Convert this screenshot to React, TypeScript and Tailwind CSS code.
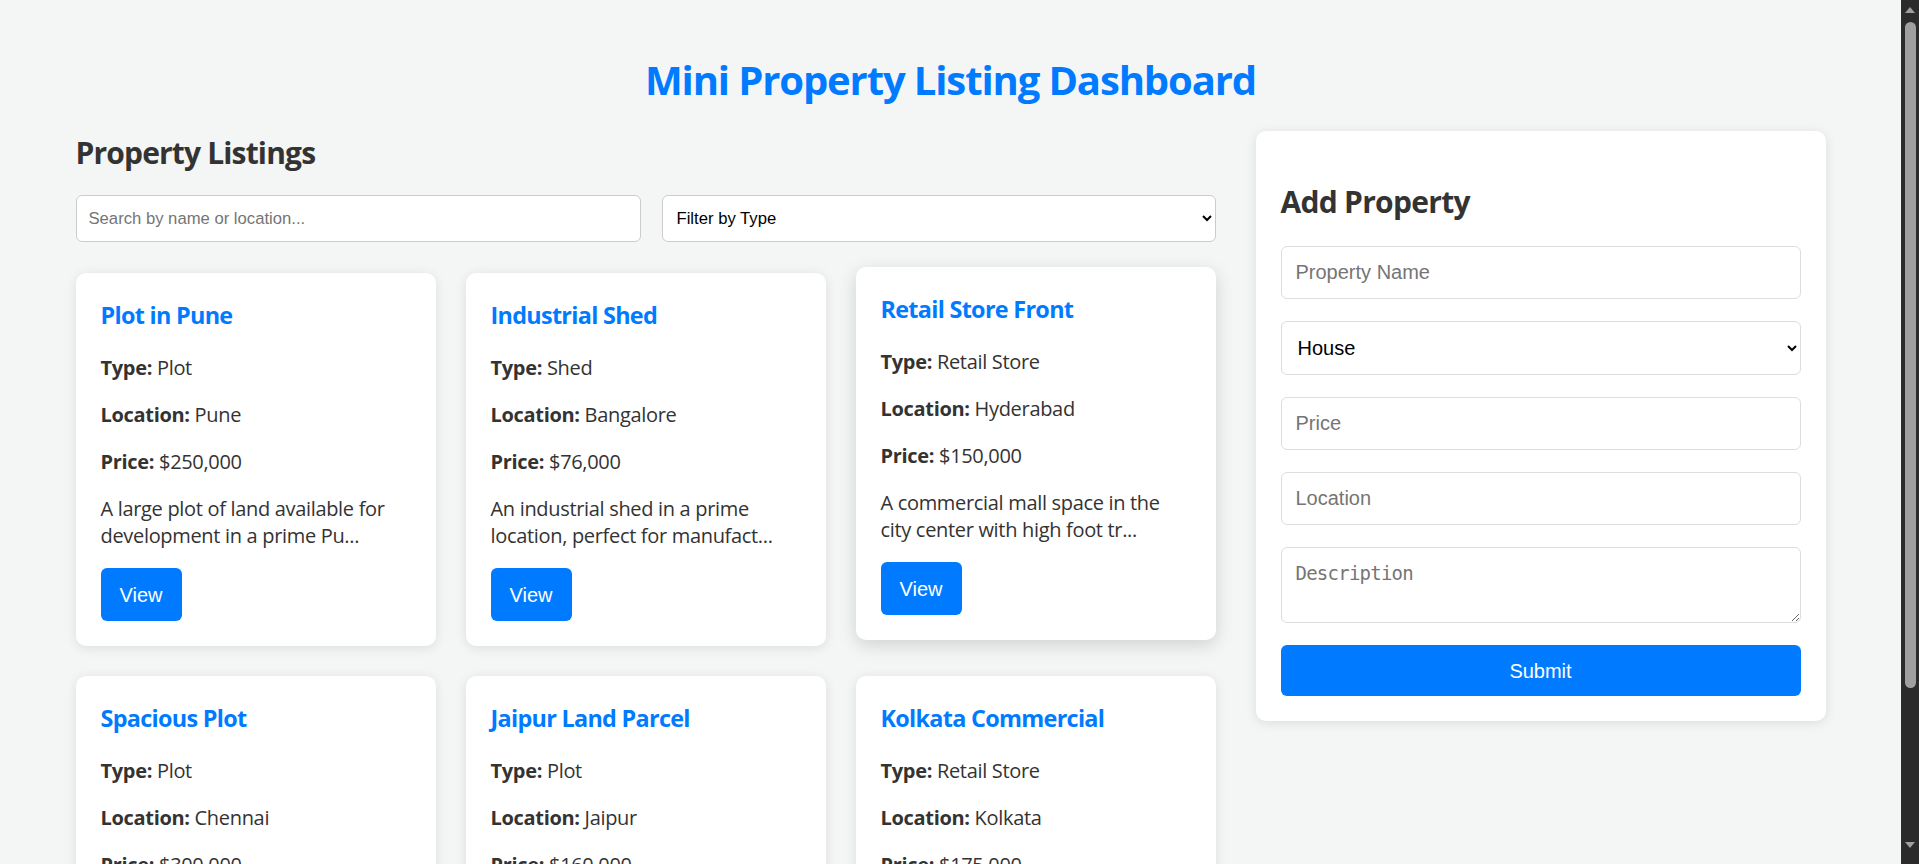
import { useState } from "react"

type Listing = {
  id: number
  name: string
  type: string
  location: string
  price: number
  description: string
}

const listings: Listing[] = [
  { id: 1, name: "Plot in Pune", type: "Plot", location: "Pune", price: 250000, description: "A large plot of land available for development in a prime Pune neighbourhood." },
  { id: 2, name: "Industrial Shed", type: "Shed", location: "Bangalore", price: 76000, description: "An industrial shed in a prime location, perfect for manufacturing units." },
  { id: 3, name: "Retail Store Front", type: "Retail Store", location: "Hyderabad", price: 150000, description: "A commercial mall space in the city center with high foot traffic." },
  { id: 4, name: "Spacious Plot", type: "Plot", location: "Chennai", price: 300000, description: "A spacious residential plot close to the highway and schools nearby." },
  { id: 5, name: "Jaipur Land Parcel", type: "Plot", location: "Jaipur", price: 160000, description: "A land parcel on the outskirts of Jaipur suitable for a farmhouse." },
  { id: 6, name: "Kolkata Commercial", type: "Retail Store", location: "Kolkata", price: 175000, description: "A commercial space in central Kolkata ideal for a showroom or office." },
]

const controlFont = "font-['Liberation_Sans',Arial,sans-serif] tracking-normal"

const PropertyCard = ({ item, hovered }: { item: Listing; hovered: boolean }) => {
  const short = item.description.length > 60 ? item.description.substring(0, 60) + "..." : item.description

  return (
    <div
      className={
        hovered
          ? "bg-white rounded-[10px] pt-[27px] pb-[25px] px-[25px] -translate-y-[6px] shadow-[0_5px_18px_rgba(0,0,0,0.15)]"
          : "bg-white rounded-[10px] pt-[27px] pb-[25px] px-[25px] shadow-[0_2px_12px_rgba(0,0,0,0.1)]"
      }
    >
      <h3 className="text-[23.4px] leading-[31px] font-bold tracking-[-0.03em] text-[#007bff] mb-[23px]">{item.name}</h3>
      <p className="text-[20px] leading-[27px]"><strong>Type:</strong> {item.type}</p>
      <p className="mt-[20px] text-[20px] leading-[27px]"><strong>Location:</strong> {item.location}</p>
      <p className="mt-[20px] text-[20px] leading-[27px]"><strong>Price:</strong> ${item.price.toLocaleString("en-US")}</p>
      <p className="mt-[20px] text-[20px] leading-[27px]">{short}</p>
      <button className={`mt-[19px] h-[53px] px-[19px] rounded-[6px] bg-[#007bff] text-white text-[20px] ${controlFont}`}>
        View
      </button>
    </div>
  )
}

// the dark page scrollbar seen at the right edge of the screenshot
const Scrollbar = () => (
  <div className="w-[18px] shrink-0 h-screen bg-[#2b2b2b] flex flex-col items-center">
    <svg width="10" height="6" viewBox="0 0 10 6" className="mt-[7px]">
      <path d="M0 6 L5 0 L10 6 Z" fill="#9f9f9f" />
    </svg>
    <div className="mt-[9px] w-[11px] h-[666px] rounded-full bg-[#9f9f9f]" />
    <div className="flex-1" />
    <svg width="10" height="6" viewBox="0 0 10 6" className="mb-[16px]">
      <path d="M0 0 L10 0 L5 6 Z" fill="#9f9f9f" />
    </svg>
  </div>
)

const App = () => {
  const [search, setSearch] = useState("")
  const [filter, setFilter] = useState("")

  const inputClass = `w-full h-[53px] px-[14px] bg-white border border-[#ddd] rounded-[6px] text-[20px] text-black placeholder:text-[#757575] outline-none ${controlFont}`

  return (
    <div className="flex h-screen overflow-hidden bg-[#f4f5f5]">
      <div className="flex-1 min-w-0 overflow-hidden text-[#333] font-['Open_Sans',sans-serif] tracking-[-0.02em]">
        <div className="mx-auto w-[1750px] pt-[53px]">
          <h1 className="text-center text-[40px] leading-[53px] font-bold tracking-[-0.028em] text-[#007bff]">
            Mini Property Listing Dashboard
          </h1>

          <div className="mt-[25px] flex items-start gap-[40px]">
            <section className="w-[1140px]">
              <h2 className="pt-[2px] text-[30px] leading-[40px] font-bold tracking-[-0.028em]">Property Listings</h2>

              <div className="mt-[22px] flex gap-[21px]">
                <input
                  value={search}
                  onChange={(e) => setSearch(e.target.value)}
                  placeholder="Search by name or location..."
                  className={`w-[565px] h-[47px] px-[12px] bg-white border border-[#ccc] rounded-[6px] text-[16.67px] text-black placeholder:text-[#757575] outline-none ${controlFont}`}
                />
                <select
                  value={filter}
                  onChange={(e) => setFilter(e.target.value)}
                  className={`flex-1 h-[47px] px-[10px] bg-white border border-[#ccc] rounded-[6px] text-[16.67px] text-black outline-none ${controlFont}`}
                >
                  <option value="">Filter by Type</option>
                  <option value="Plot">Plot</option>
                  <option value="Shed">Shed</option>
                  <option value="Retail Store">Retail Store</option>
                  <option value="House">House</option>
                </select>
              </div>

              <div className="mt-[31px] grid grid-cols-3 gap-[30px]">
                {listings.map((item) => (
                  <PropertyCard key={item.id} item={item} hovered={item.id === 3} />
                ))}
              </div>
            </section>

            <aside className="flex-1 bg-white rounded-[10px] p-[25px] shadow-[0_2px_12px_rgba(0,0,0,0.1)]">
              <h2 className="mt-[26px] mb-[-1px] text-[30px] leading-[40px] font-bold tracking-[-0.024em]">Add Property</h2>
              <form className="mt-[25px] flex flex-col gap-[22px]" onSubmit={(e) => e.preventDefault()}>
                <input placeholder="Property Name" className={inputClass} />
                <select className={`w-full h-[54px] px-[12px] bg-white border border-[#ddd] rounded-[6px] text-[20px] text-black outline-none ${controlFont}`}>
                  <option>House</option>
                  <option>Plot</option>
                  <option>Shed</option>
                  <option>Retail Store</option>
                </select>
                <input placeholder="Price" className={inputClass} />
                <input placeholder="Location" className={inputClass} />
                <textarea
                  placeholder="Description"
                  className="w-full h-[76px] px-[14px] pt-[14px] pb-[10px] bg-white border border-[#ddd] rounded-[6px] text-[19px] leading-[23px] text-black placeholder:text-[#757575] outline-none font-['DejaVu_Sans_Mono',monospace] tracking-[-0.04em]"
                />
                <button type="submit" className={`w-full h-[51px] rounded-[6px] bg-[#007bff] text-white text-[20px] ${controlFont}`}>
                  Submit
                </button>
              </form>
            </aside>
          </div>
        </div>
      </div>
      <Scrollbar />
    </div>
  )
}

export default App
